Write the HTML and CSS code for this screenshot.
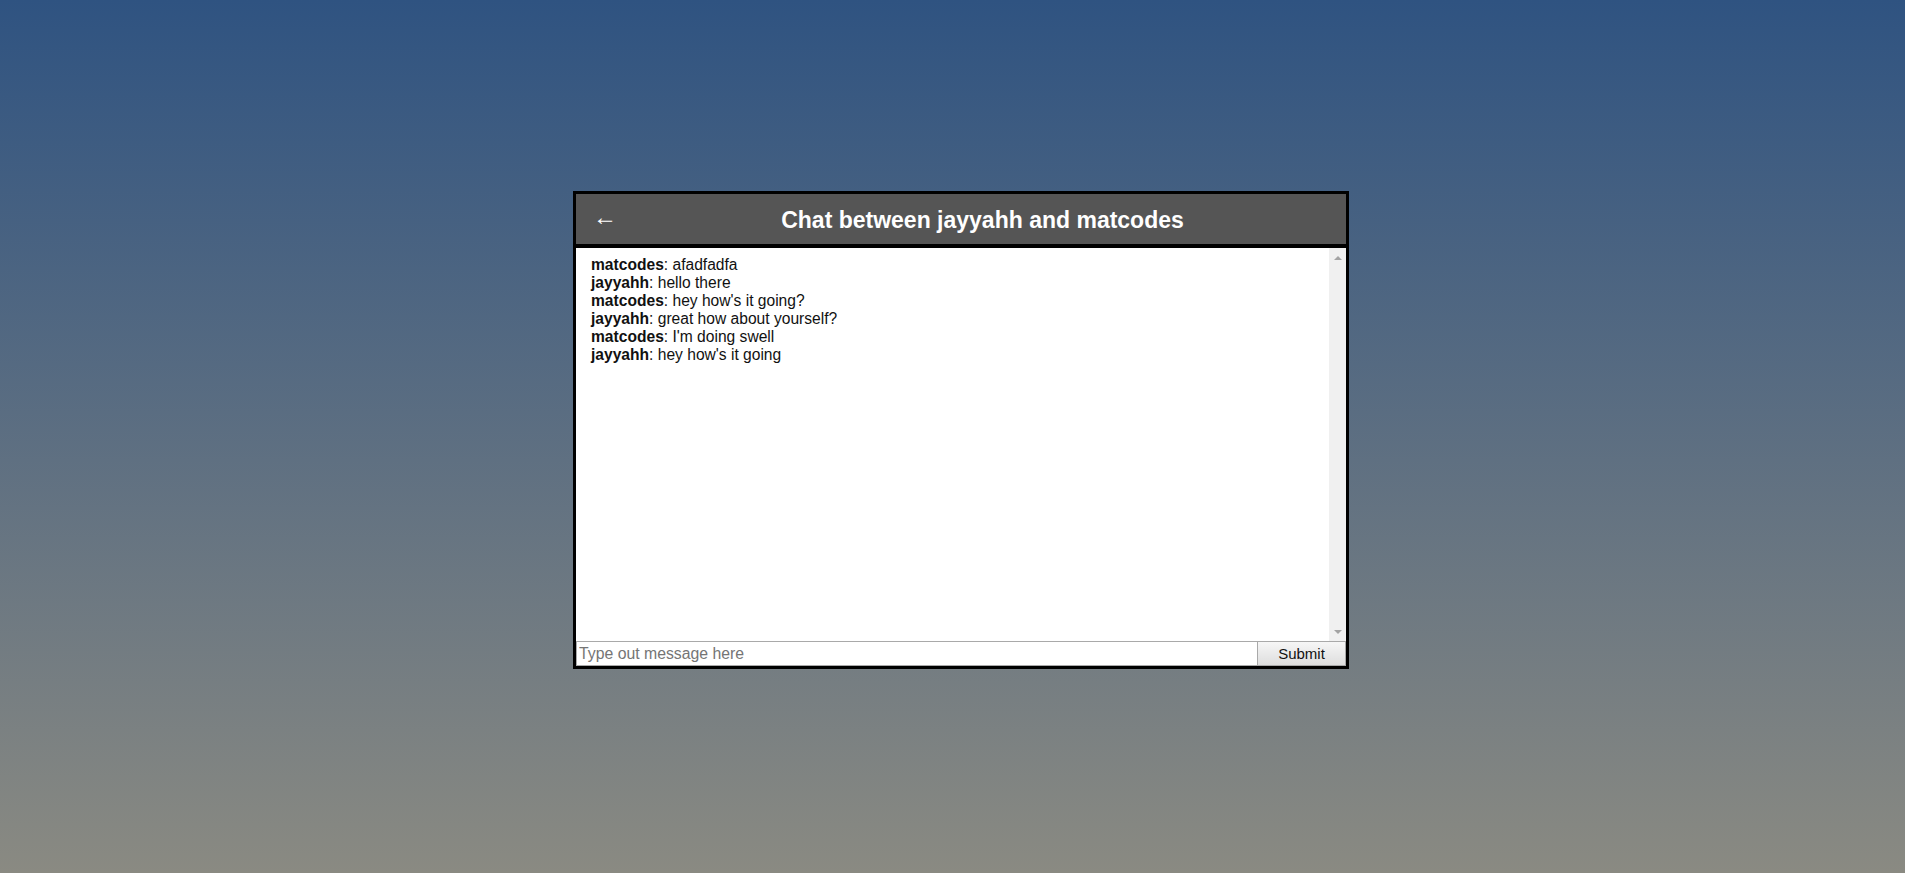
FILE: index.html
```html
<!DOCTYPE html>
<html>
<head>
<meta charset="utf-8">
<link rel="stylesheet" href="styles.css">
</head>
<body>
<div class="chat">
  <div class="chat-header">
    <span class="back">&larr;</span>
    <h1 class="title">Chat between jayyahh and matcodes</h1>
  </div>
  <div class="messages">
    <div class="messages-list">
      <div class="msg"><b>matcodes</b>: afadfadfa</div>
      <div class="msg"><b>jayyahh</b>: hello there</div>
      <div class="msg"><b>matcodes</b>: hey how's it going?</div>
      <div class="msg"><b>jayyahh</b>: great how about yourself?</div>
      <div class="msg"><b>matcodes</b>: I'm doing swell</div>
      <div class="msg"><b>jayyahh</b>: hey how's it going</div>
    </div>
    <div class="scrollbar">
      <span class="scroll-arrow up"></span>
      <span class="scroll-arrow down"></span>
    </div>
  </div>
  <form class="composer">
    <input class="composer-input" type="text" placeholder="Type out message here">
    <button class="composer-submit" type="button">Submit</button>
  </form>
</div>
</body>
</html>
```

FILE: styles.css
```css
html, body {
  margin: 0;
  height: 100%;
}
body {
  background: linear-gradient(to bottom, #2f5381 0%, #8a8a82 100%);
  font-family: "Liberation Sans", Arial, sans-serif;
  overflow: hidden;
}
.chat {
  width: 770px;
  margin: 191px 0 0 573px;
  border: 3px solid #000;
  background: #fff;
  display: flex;
  flex-direction: column;
}
.chat-header {
  height: 50px;
  background: #555555;
  border-bottom: 4px solid #000;
  display: flex;
  align-items: center;
}
.back {
  color: #fff;
  font-size: 24px;
  margin-left: 17px;
  width: 26px;
  line-height: 1;
  padding-bottom: 5px;
}
.title {
  flex: 1;
  margin: 0;
  padding-top: 2px;
  text-align: center;
  color: #fff;
  font-size: 23px;
  font-weight: bold;
}
.messages {
  height: 393px;
  display: flex;
}
.messages-list {
  flex: 1;
  padding: 8px 15px;
  font-size: 15.6px;
  line-height: 18px;
  color: #111;
}
.scrollbar {
  width: 17px;
  background: #f0f0f0;
  display: flex;
  flex-direction: column;
  justify-content: space-between;
  align-items: center;
  padding: 8px 0 7px;
  box-sizing: border-box;
}
.scroll-arrow {
  width: 0;
  height: 0;
  border-left: 4px solid transparent;
  border-right: 4px solid transparent;
}
.scroll-arrow.up {
  border-bottom: 4px solid #a3a3a3;
}
.scroll-arrow.down {
  border-top: 4px solid #a3a3a3;
}
.composer {
  display: flex;
  margin: 0;
  height: 25px;
}
.composer-input {
  flex: 1;
  box-sizing: border-box;
  height: 25px;
  margin: 0;
  border: 1px solid #a9a9a9;
  border-right: none;
  padding: 1px 2px;
  font-family: "Liberation Sans", Arial, sans-serif;
  font-size: 15.8px;
  color: #333;
  outline: none;
}
.composer-input::placeholder {
  color: #757575;
}
.composer-submit {
  width: 89px;
  height: 25px;
  box-sizing: border-box;
  margin: 0;
  border: 1px solid #a9a9a9;
  background: linear-gradient(#f6f6f6, #dedede);
  font-family: "Liberation Sans", Arial, sans-serif;
  font-size: 15px;
  color: #111;
  padding: 0;
}
```
